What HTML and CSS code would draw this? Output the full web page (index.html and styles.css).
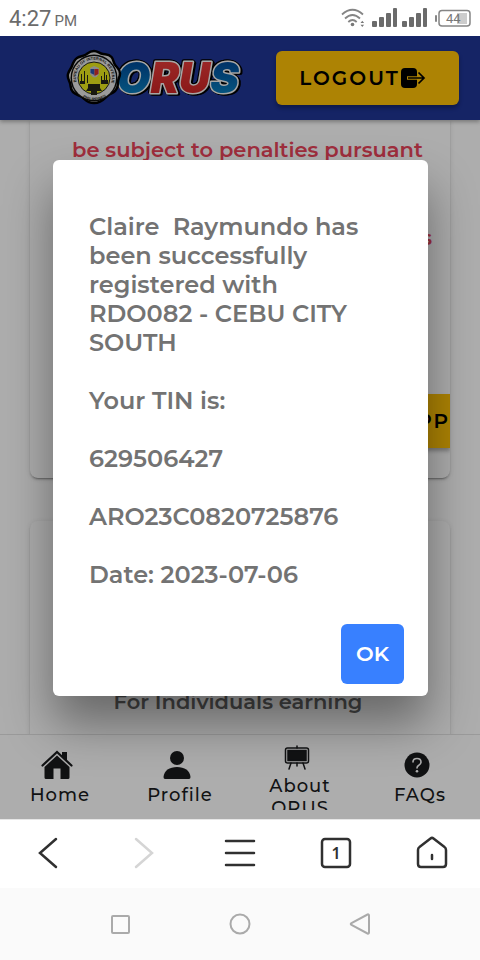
FILE: index.html
```html
<!DOCTYPE html>
<html lang="en">
<head>
    <meta charset="UTF-8">
    <meta name="viewport" content="width=device-width, initial-scale=1.0">
    <title>ORUS</title>
    <link rel="stylesheet" href="styles.css">
</head>
<body>

<div class="status-bar">
    <div class="clock"><span>4:27</span><small>PM</small></div>
    <div class="status-icons">
        <svg class="wifi" width="24" height="20" viewBox="0 0 24 20" fill="none" stroke="#858585" stroke-width="1.8">
            <path d="M1 6.500Q11.500 -3 22 6.500M4 10.500Q11.500 3.500 19 10.500M7.300 14Q11.500 10 15.700 14"/>
            <circle cx="11.500" cy="16.500" r="1.800" fill="#777" stroke="none"/>
            <path d="M19.500 15l1.800-2.200 1.800 2.200zM19.500 16.800l1.800 2.200 1.800-2.200z" fill="#777" stroke="none"/>
        </svg>
        <svg width="26" height="20" viewBox="0 0 26 20" fill="#6b6b6b">
            <rect x="0" y="13" width="5" height="6" rx="1"/><rect x="7" y="9" width="5" height="10" rx="1"/><rect x="14" y="5" width="5" height="14" rx="1"/><rect x="21" y="0" width="4" height="19" rx="1"/>
        </svg>
        <svg width="26" height="20" viewBox="0 0 26 20" fill="#6b6b6b">
            <rect x="0" y="13" width="5" height="6" rx="1"/><rect x="7" y="9" width="5" height="10" rx="1"/><rect x="14" y="5" width="5" height="14" rx="1"/><rect x="21" y="0" width="4" height="19" rx="1"/>
        </svg>
        <svg class="battery" width="36" height="18" viewBox="0 0 36 18">
            <rect x="22" y="4" width="10" height="11" fill="#ccc"/>
            <rect x="4" y="1.500" width="31" height="15.500" rx="3" fill="none" stroke="#858585" stroke-width="1.500"/>
            <rect x="0" y="6" width="2" height="7" rx="1" fill="#858585"/>
            <text x="11" y="14">44</text>
        </svg>
    </div>
</div>

<div class="app">
    <header class="header">
        <svg class="logo" width="180" height="58" viewBox="0 0 180 58" role="img" aria-label="ORUS">
            <defs>
                <linearGradient id="blue" x1="0" y1="0" x2="0" y2="1">
                    <stop offset="0.2" stop-color="#004a98"/>
                    <stop offset="0.9" stop-color="#0a83c0"/>
                </linearGradient>
                <linearGradient id="red" x1="0" y1="0" x2="0" y2="1">
                    <stop offset="0.2" stop-color="#e53a38"/>
                    <stop offset="0.9" stop-color="#c92223"/>
                </linearGradient>
                <path id="ring" d="M10.500 33a18 18 0 1 1 35 0"/>
                <path id="ringLow" d="M7 36a22 22 0 0 0 42 0"/>
            </defs>
            <text class="wordmark" x="51" y="44"><tspan fill="url(#blue)">O</tspan><tspan fill="url(#red)">RU</tspan><tspan fill="url(#blue)">S</tspan></text>
            <path d="M28 2c4 0 5 2.500 9 3s6 0 8.500 3 1.500 5.500 4 8.500 4.500 4 4.500 8-2 5-2 8.500 0 6-3 9-5 2-8 5-6 7-13 7-9-4-12-6-6-2-9-5-2-6-3-9-3-5-2-9 3-5 4-8 2-6 5-8 5-1.500 8-3 4-4 9-4z" fill="#ddd" stroke="#000" stroke-width="2.500"/>
            <circle cx="28" cy="29" r="23.500" fill="#0d0d0d"/>
            <circle cx="28" cy="29" r="22" fill="#e5e5e5"/>
            <circle cx="28" cy="29" r="16" fill="#e8e81b" stroke="#222"/>
            <text class="seal-text"><textPath href="#ring">BUREAU OF INTERNAL REVENUE</textPath></text>
            <text class="seal-text"><textPath href="#ringLow" startOffset="16">PHILIPPINES</textPath></text>
            <path d="M14 32h5v3h-5zM15 25h1v7h-1zM18 22h1v12h-1zM21 26h1v8h-1zM35 31h7v4h-7zM35 27h1v4h-1zM38 23h1v8h-1zM40 26h1v5h-1zM22 35h12v4l2 3h-5v4h-6v-4h-5l2-3z" fill="#252519"/>
            <path d="M24 19l4-2 5 2v6q-4 7-9 0z" fill="#ccc"/>
            <path d="M24.500 20h4v6l-4-2z" fill="#2c56b0"/>
            <path d="M28.500 20h4v5l-4 2z" fill="#d7302d"/>
        </svg>
        <button type="button" class="gold-btn logout">LOGOUT
            <svg width="26" height="22" viewBox="0 0 26 22">
                <rect x="1" y="1" width="16" height="20" rx="4" fill="#000"/>
                <path d="M7 11h10" stroke="#ffc107" stroke-width="3.500"/>
                <path d="M8 11h16M18.500 5.500l5.500 5.500-5.500 5.500" fill="none" stroke="#000" stroke-width="1.700"/>
            </svg>
        </button>
    </header>

    <main class="content">
        <section class="card card-first">
            <p class="warning">be subject to penalties pursuant</p>
            <p class="warning warning-end">s</p>
            <div class="card-actions">
                <button type="button" class="gold-btn">APP</button>
            </div>
        </section>
        <section class="card card-second">
            <p>For Individuals earning</p>
        </section>
    </main>

    <nav class="tab-bar">
        <a class="tab" href="#home">
            <svg width="32" height="30" viewBox="0 0 32 30" fill="#1a1b1d">
                <path d="M21 2h5v9l-5-5z"/>
                <path d="M1.500 15.500L16 2l14.500 13.500" fill="none" stroke="#1a1b1d" stroke-width="2.200" stroke-linecap="round"/>
                <path d="M16 5.500L28.500 17v10.500q0 1.500-1.500 1.500h-7.500V18.500h-7V29H5q-1.500 0-1.500-1.500V17z"/>
            </svg>
            <span>Home</span>
        </a>
        <a class="tab" href="#profile">
            <svg width="28" height="30" viewBox="0 0 28 30" fill="#1a1b1d">
                <circle cx="14" cy="8" r="7"/>
                <path d="M.500 27C1 20.500 6.500 17 14 17s13 3.500 13.500 10q0 2-1.500 2H2q-1.500 0-1.500-2z"/>
            </svg>
            <span>Profile</span>
        </a>
        <a class="tab" href="#about">
            <svg width="26" height="26" viewBox="0 0 26 26" fill="none" stroke="#1a1b1d" stroke-width="1.500" stroke-linecap="round">
                <rect x="1.500" y="3" width="23" height="15" rx="2"/>
                <rect x="4" y="5.500" width="18" height="10" fill="#1a1b1d"/>
                <path d="M13 1v2M13 18v3M7 18l-2 6M19 18l2 6"/>
            </svg>
            <span>About<br>ORUS</span>
        </a>
        <a class="tab" href="#faqs">
            <svg width="28" height="30" viewBox="0 0 28 30">
                <circle cx="14" cy="15" r="12.500" fill="#1a1b1d"/>
                <path d="M10 12Q10 8.500 14 8.500t4 3.500q0 2-2.200 3.300Q14 16.300 14 18" fill="none" stroke="#fff" stroke-width="1.600" stroke-linecap="round"/>
                <circle cx="14" cy="21.300" r="1.300" fill="#fff"/>
            </svg>
            <span>FAQs</span>
        </a>
    </nav>

    <div class="overlay">
        <div class="dialog" role="dialog" aria-modal="true" aria-labelledby="message">
            <div class="message" id="message">
                <p>Claire&nbsp; Raymundo has been successfully<br>registered with<br>RDO082 - CEBU CITY SOUTH</p>
                <p>Your TIN is:</p>
                <p>629506427</p>
                <p>ARO23C0820725876</p>
                <p>Date: 2023-07-06</p>
            </div>
            <button type="button" class="ok-btn">OK</button>
        </div>
    </div>
</div>

<div class="browser-bar">
    <button type="button" aria-label="Back">
        <svg width="34" height="34" viewBox="0 0 34 34"><path d="M25 3L9 17l16 14"/></svg>
    </button>
    <button type="button" aria-label="Forward" disabled>
        <svg width="34" height="34" viewBox="0 0 34 34"><path d="M9 3l16 14L9 31"/></svg>
    </button>
    <button type="button" aria-label="Menu">
        <svg width="34" height="34" viewBox="0 0 34 34"><path d="M3 5h28M3 17h28M3 29h28"/></svg>
    </button>
    <button type="button" aria-label="Tabs">
        <svg width="34" height="34" viewBox="0 0 34 34"><rect x="3" y="3" width="28" height="28" rx="3"/><text x="17" y="23">1</text></svg>
    </button>
    <button type="button" aria-label="Home page">
        <svg width="34" height="34" viewBox="0 0 34 34"><path d="M3 14q0-2 1.500-3L15.500 2.500q1.500-1.200 3 0L29.500 11q1.500 1 1.500 3v14q0 3-3 3H6q-3 0-3-3zM17 19v4"/></svg>
    </button>
</div>

<div class="system-bar">
    <button type="button" aria-label="Recent apps">
        <svg width="24" height="24" viewBox="0 0 24 24"><rect x="4" y="4" width="17" height="17" rx="1"/></svg>
    </button>
    <button type="button" aria-label="Home screen">
        <svg width="24" height="24" viewBox="0 0 24 24"><circle cx="12" cy="12" r="9.500"/></svg>
    </button>
    <button type="button" aria-label="Back">
        <svg width="24" height="24" viewBox="0 0 24 24"><path d="M19.500 2.500q1.500-.500 1.500 1v17q0 1.500-1.500 1L3.500 13q-1.500-1 0-2z"/></svg>
    </button>
</div>

</body>
</html>
```
FILE: styles.css
```css
* {
    box-sizing: border-box;
}
body {
    margin: 0;
    height: 100vh;
    display: flex;
    flex-direction: column;
    overflow: hidden;
    background: #fff;
    font-family: Montserrat, Inter, "Open Sans", sans-serif;
    font-weight: 600;
}
p {
    margin: 0;
}
button {
    font: inherit;
    border: none;
    cursor: pointer;
}
svg {
    display: block;
    flex: none;
}

/* phone status bar */
.status-bar {
    display: flex;
    align-items: center;
    justify-content: space-between;
    height: 36px;
    padding: 0 9px;
    color: #6b6b6b;
    font-family: Roboto, sans-serif;
    font-weight: 400;
}
.clock {
    display: flex;
    align-items: baseline;
    gap: 3px;
    font-size: 22px;
}
.clock small {
    font-size: 15px;
}
.status-icons {
    display: flex;
    align-items: center;
    gap: 4px;
}
.wifi {
    margin-right: 3px;
}
.battery {
    margin-left: 3px;
}
.battery text {
    font-size: 13px;
    fill: #777;
}

/* page */
.app {
    position: relative;
    flex: 1;
    min-height: 0;
    display: flex;
    flex-direction: column;
    overflow: hidden;
}
.header {
    display: flex;
    align-items: center;
    justify-content: flex-end;
    gap: 30px;
    height: 84px;
    padding: 0 21px;
    background: #1f3596;
    box-shadow: 0 2px 4px rgba(0, 0, 0, 0.3);
    z-index: 1;
}
.wordmark {
    font: italic 900 43px Inter, "Liberation Sans", sans-serif;
    stroke: #f5f5f5;
    stroke-width: 3px;
    stroke-linejoin: round;
    paint-order: stroke;
    filter: drop-shadow(1px 1px 0 #000) drop-shadow(-1px -1px 0 #000) drop-shadow(1px 0 0 #000);
}
.seal-text {
    font: 700 4px "Liberation Sans", sans-serif;
    fill: #222;
}
.gold-btn {
    display: flex;
    align-items: center;
    height: 54px;
    color: #000;
    background: #ffc107;
    font-size: 20px;
    letter-spacing: 2px;
    box-shadow: 0 3px 4px rgba(0, 0, 0, 0.3);
}
.logout {
    width: 183px;
    justify-content: center;
    border-radius: 6px;
    padding: 0 10px 0 0;
}

.content {
    flex: 1;
    min-height: 0;
    overflow: hidden;
    padding: 0 30px;
}
.card {
    overflow: hidden;
    border-radius: 8px;
    box-shadow: 0 3px 1px -2px rgba(0, 0, 0, 0.2), 0 2px 2px rgba(0, 0, 0, 0.14), 0 1px 5px rgba(0, 0, 0, 0.12);
    font-size: 21px;
    line-height: 30px;
}
.card-first {
    height: 358px;
    padding-top: 15px;
    border-radius: 0 0 8px 8px;
    display: flex;
    flex-direction: column;
}
.warning {
    color: #eb445a;
    text-align: center;
    padding-left: 15px;
}
.warning-end {
    padding: 58px 18px 0 0;
    text-align: right;
}
.card-actions {
    margin-top: auto;
    padding-bottom: 30px;
    display: flex;
    justify-content: flex-end;
}
.card-actions .gold-btn {
    padding: 0 0 0 20px;
}
.card-second {
    height: 300px;
    margin-top: 43px;
    padding: 166px 4px 0 0;
    color: #666;
    text-align: center;
}

.tab-bar {
    display: grid;
    grid-template-columns: repeat(4, 1fr);
    height: 85px;
    padding: 10px 0 9px;
    background: #fff;
    border-top: 1px solid #e3e3e3;
    z-index: 1;
}
.tab {
    display: flex;
    flex-direction: column;
    align-items: center;
    justify-content: safe center;
    gap: 4px;
    height: 65px;
    overflow: hidden;
    color: #1a1b1d;
    font-size: 18px;
    font-weight: 500;
    line-height: 22px;
    letter-spacing: 1px;
    text-align: center;
    text-decoration: none;
}
.tab svg {
    margin-right: 6px;
}

/* dialog */
.overlay {
    position: absolute;
    inset: 0;
    z-index: 2;
    display: flex;
    align-items: center;
    padding: 0 52px 0 53px;
    background: rgba(0, 0, 0, 0.32);
}
.dialog {
    flex: 1;
    display: flex;
    flex-direction: column;
    padding: 52px 24px 12px 36px;
    background: #fff;
    border-radius: 6px;
    box-shadow: 0 28px 48px rgba(0, 0, 0, 0.4);
}
.message {
    display: flex;
    flex-direction: column;
    gap: 29px;
    color: #737373;
    font-size: 24px;
    line-height: 29px;
}
.message p {
    padding-right: 20px;
}
.ok-btn {
    align-self: flex-end;
    width: 63px;
    height: 60px;
    margin-top: 35px;
    padding: 0;
    border-radius: 6px;
    color: #fff;
    background: #3880ff;
    font-size: 21px;
}

/* browser controls */
.browser-bar {
    display: grid;
    grid-template-columns: repeat(5, 1fr);
    height: 69px;
    padding-bottom: 3px;
    border-top: 1px solid #e6e6e6;
}
.browser-bar button,
.system-bar button {
    display: flex;
    align-items: center;
    justify-content: center;
    padding: 0;
    background: none;
}
.browser-bar svg {
    fill: none;
    stroke: #303030;
    stroke-width: 2.5;
    stroke-linecap: round;
}
.browser-bar button:disabled svg {
    stroke: #d5d5d5;
}
.browser-bar text {
    fill: #303030;
    stroke: none;
    font: 600 16px "Noto Sans", sans-serif;
    text-anchor: middle;
}
.system-bar {
    display: grid;
    grid-template-columns: repeat(3, 1fr);
    height: 72px;
    padding: 0 60px;
    background: #fafafa;
}
.system-bar svg {
    fill: none;
    stroke: #aaa;
    stroke-width: 2px;
}
```
